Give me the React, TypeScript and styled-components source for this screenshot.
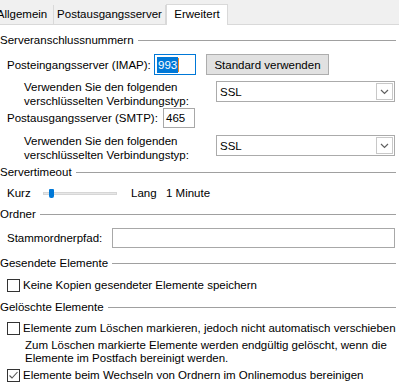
import React from 'react'
import styled, { createGlobalStyle } from 'styled-components'

const GlobalStyle = createGlobalStyle`
  html, body { margin: 0; padding: 0; background: #fff; }
  body {
    font-family: "Liberation Sans", Arial, sans-serif;
    font-size: 11.5px;
    color: #000;
  }
`

const Window = styled.div`
  width: 399px;
  height: 389px;
  overflow: hidden;
  display: flex;
  flex-direction: column;
  background: #fff;
  & > * { flex: none; }
`

const TabStrip = styled.div`
  display: flex;
  align-items: flex-end;
  height: 25px;
  box-sizing: border-box;
  background: #f0f0f0;
  border-bottom: 1px solid #d9d9d9;
`

const Tab = styled.div<{ $w: number; $first?: boolean; $active?: boolean }>`
  box-sizing: border-box;
  width: ${p => p.$w}px;
  margin-left: ${p => (p.$first ? -9 : 0)}px;
  height: ${p => (p.$active ? 21 : 19)}px;
  margin-bottom: ${p => (p.$active ? -1 : 0)}px;
  display: flex;
  align-items: center;
  justify-content: center;
  padding-bottom: ${p => (p.$active ? 3 : 1)}px;
  background: ${p => (p.$active ? '#fff' : '#f0f0f0')};
  border-right: 1px solid #d9d9d9;
  white-space: nowrap;
  ${p => p.$active && 'border: 1px solid #d9d9d9; border-bottom: none;'}
`

const Body = styled.div`
  display: flex;
  flex-direction: column;
  & > * { flex: none; }
`

const GroupHead = styled.div<{ $mt: number }>`
  display: flex;
  align-items: center;
  height: 16px;
  margin-top: ${p => p.$mt}px;
  padding-right: 3px;
  white-space: nowrap;
  &::after {
    content: '';
    flex: 1;
    height: 1px;
    background: #a0a0a0;
    margin-left: 4px;
  }
`

const Row = styled.div<{ $mt: number; $h: number; $pl?: number; $pr?: number }>`
  display: flex;
  align-items: center;
  margin-top: ${p => p.$mt}px;
  height: ${p => p.$h}px;
  padding-left: ${p => p.$pl ?? 7}px;
  padding-right: ${p => p.$pr ?? 0}px;
  white-space: nowrap;
`

const TopRow = styled(Row)`
  align-items: flex-start;
`

const Label = styled.div<{ $w: number }>`
  width: ${p => p.$w}px;
  flex: none;
`

const TwoLineLabel = styled.div<{ $w: number }>`
  width: ${p => p.$w}px;
  flex: none;
  line-height: 14px;
`

const TextBox = styled.div<{ $w?: number; $focus?: boolean }>`
  box-sizing: border-box;
  ${p => (p.$w ? `width: ${p.$w}px; flex: none;` : 'flex: 1;')}
  height: ${p => (p.$focus ? 21 : 20)}px;
  border: 1px solid ${p => (p.$focus ? '#0078d7' : '#a8a8a8')};
  background: #fff;
  display: flex;
  align-items: center;
  padding-left: 2px;
`

const Selected = styled.span`
  background: #0078d7;
  color: #fff;
  padding: 1px 1px;
  line-height: 14px;
`

const Caret = styled.span`
  width: 1px;
  height: 14px;
  background: #f08a24;
`

const Button = styled.div`
  box-sizing: border-box;
  width: 123px;
  height: 21px;
  margin-left: 10px;
  background: #e1e1e1;
  border: 1px solid #adadad;
  display: flex;
  align-items: center;
  justify-content: center;
`

const Select = styled.div`
  box-sizing: border-box;
  width: 179px;
  height: 21px;
  margin-top: 1px;
  border: 1px solid #ababab;
  background: #fff;
  display: flex;
  align-items: center;
  padding: 0 1px 0 3px;
`

const SelectValue = styled.div`
  flex: 1;
`

const DropButton = styled.div`
  box-sizing: border-box;
  width: 17px;
  height: 17px;
  border: 1px solid #c8c8c8;
  display: flex;
  align-items: center;
  justify-content: center;
`

const Track = styled.div`
  position: relative;
  width: 74px;
  height: 3px;
  background: #e7e7e7;
  border: 1px solid #d6d6d6;
  box-sizing: border-box;
  flex: none;
`

const Thumb = styled.div`
  position: absolute;
  left: 5px;
  top: -4px;
  width: 5px;
  height: 9px;
  background: #0078d7;
  border-radius: 1px 1px 2px 2px;
`

const Spacer = styled.div<{ $w: number }>`
  width: ${p => p.$w}px;
  flex: none;
`

const CheckRow = styled(Row)`
  gap: 3px;
`

const Box = styled.div`
  box-sizing: border-box;
  width: 13px;
  height: 13px;
  border: 1px solid #333;
  background: #fff;
  flex: none;
  display: flex;
  align-items: center;
  justify-content: center;
`

const Desc = styled.div`
  margin-top: 4px;
  padding-left: 25px;
  line-height: 13px;
  white-space: nowrap;
`

const Chevron = () => (
  <svg width="9" height="6" viewBox="0 0 9 6">
    <polyline points="1,1 4.5,4.5 8,1" fill="none" stroke="#606060" strokeWidth="1.2" />
  </svg>
)

const Check = ({ checked }: { checked?: boolean }) => (
  <Box>
    {checked && (
      <svg width="11" height="11" viewBox="0 0 11 11">
        <polyline points="1.5,5.5 4,8 9.5,2" fill="none" stroke="#555" strokeWidth="1.1" />
      </svg>
    )}
  </Box>
)

const EncryptionRow = ({ mt }: { mt: number }) => (
  <TopRow $mt={mt} $h={27} $pl={24}>
    <TwoLineLabel $w={192}>
      Verwenden Sie den folgenden
      <br />
      verschlüsselten Verbindungstyp:
    </TwoLineLabel>
    <Select>
      <SelectValue>SSL</SelectValue>
      <DropButton>
        <Chevron />
      </DropButton>
    </Select>
  </TopRow>
)

export default function App() {
  return (
    <Window>
      <GlobalStyle />
      <TabStrip>
        <Tab $w={63} $first>Allgemein</Tab>
        <Tab $w={112}>Postausgangsserver</Tab>
        <Tab $w={62} $active>Erweitert</Tab>
      </TabStrip>
      <Body>
        <GroupHead $mt={7}>Serveranschlussnummern</GroupHead>
        <Row $mt={6} $h={21}>
          <Label $w={147}>Posteingangsserver (IMAP):</Label>
          <TextBox $w={42} $focus>
            <Selected>993</Selected>
            <Caret />
          </TextBox>
          <Button>Standard verwenden</Button>
        </Row>
        <EncryptionRow mt={5} />
        <Row $mt={0} $h={21}>
          <Label $w={156}>Postausgangsserver (SMTP):</Label>
          <TextBox $w={32}>465</TextBox>
        </Row>
        <EncryptionRow mt={6} />

        <GroupHead $mt={3}>Servertimeout</GroupHead>
        <Row $mt={5} $h={16}>
          <Label $w={36}>Kurz</Label>
          <Track>
            <Thumb />
          </Track>
          <Spacer $w={14} />
          <Label $w={35}>Lang</Label>
          <span>1 Minute</span>
        </Row>

        <GroupHead $mt={5}>Ordner</GroupHead>
        <Row $mt={6} $h={20} $pr={4}>
          <Label $w={105}>Stammordnerpfad:</Label>
          <TextBox />
        </Row>

        <GroupHead $mt={7}>Gesendete Elemente</GroupHead>
        <CheckRow $mt={7} $h={14}>
          <Check />
          <span>Keine Kopien gesendeter Elemente speichern</span>
        </CheckRow>

        <GroupHead $mt={7}>Gelöschte Elemente</GroupHead>
        <CheckRow $mt={6} $h={14}>
          <Check />
          <span>Elemente zum Löschen markieren, jedoch nicht automatisch verschieben</span>
        </CheckRow>
        <Desc>
          Zum Löschen markierte Elemente werden endgültig gelöscht, wenn die
          <br />
          Elemente im Postfach bereinigt werden.
        </Desc>
        <CheckRow $mt={3} $h={14}>
          <Check checked />
          <span>Elemente beim Wechseln von Ordnern im Onlinemodus bereinigen</span>
        </CheckRow>
      </Body>
    </Window>
  )
}
